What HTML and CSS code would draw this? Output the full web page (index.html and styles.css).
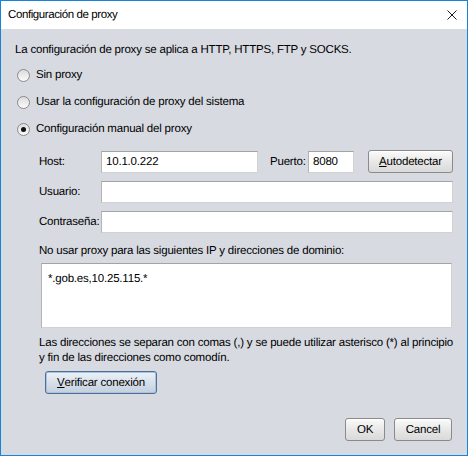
FILE: index.html
```html
<!DOCTYPE html>
<html lang="es">
<head>
<meta charset="utf-8">
<title>Configuración de proxy</title>
<link rel="stylesheet" href="styles.css">
</head>
<body>
<div class="window">
  <div class="titlebar">
    <span class="title">Configuración de proxy</span>
    <svg class="close" width="10" height="10" viewBox="0 0 10 10"><path d="M0.5 0.5 L9.5 9.5 M9.5 0.5 L0.5 9.5" stroke="#1b1b1b" stroke-width="1" fill="none"/></svg>
  </div>
  <div class="content">
    <div class="intro">La configuración de proxy se aplica a HTTP, HTTPS, FTP y SOCKS.</div>
    <div class="radios">
      <div class="radio-row"><span class="radio"></span><span>Sin proxy</span></div>
      <div class="radio-row"><span class="radio"></span><span>Usar la configuración de proxy del sistema</span></div>
      <div class="radio-row"><span class="radio checked"></span><span>Configuración manual del proxy</span></div>
    </div>
    <div class="manual">
      <div class="form">
        <span class="label">Host:</span>
        <div class="host-row">
          <div class="input host">10.1.0.222</div>
          <span class="label puerto">Puerto:</span>
          <div class="input port">8080</div>
          <div class="btn auto"><u>A</u>utodetectar</div>
        </div>
        <span class="label">Usuario:</span>
        <div class="input"></div>
        <span class="label">Contraseña:</span>
        <div class="input"></div>
      </div>
      <div class="exclude-label">No usar proxy para las siguientes IP y direcciones de dominio:</div>
      <div class="textarea">*.gob.es,10.25.115.*</div>
      <div class="note">Las direcciones se separan con comas (,) y se puede utilizar asterisco (*) al principio<br>y fin de las direcciones como comodín.</div>
      <div class="btn verify"><u>V</u>erificar conexión</div>
    </div>
    <div class="footer">
      <div class="btn ok">OK</div>
      <div class="btn cancel">Cancel</div>
    </div>
  </div>
</div>
</body>
</html>
```
FILE: styles.css
```css
html, body {
  margin: 0;
  padding: 0;
}
body {
  font-family: "Liberation Sans", Arial, sans-serif;
  font-size: 11.5px;
  letter-spacing: -0.2px;
  color: #000;
  background: #fff;
  text-rendering: geometricPrecision;
}
.window {
  width: 468px;
  height: 456px;
  box-sizing: border-box;
  border: 1px solid #1883d7;
  display: flex;
  flex-direction: column;
}
.titlebar {
  height: 28px;
  background: #fff;
  display: flex;
  align-items: center;
  justify-content: space-between;
  padding: 0 10px 0 7px;
  flex: none;
}
.title {
  font-size: 11.5px;
  letter-spacing: -0.4px;
  color: #000;
}
.close {
  display: block;
  margin-top: -1px;
}
.content {
  flex: 1;
  background: #d7dae1;
  padding: 13px 15px 14px 14px;
  display: flex;
  flex-direction: column;
  white-space: nowrap;
}
.intro {
  line-height: 17px;
}
.radios {
  margin-top: 3px;
  display: flex;
  flex-direction: column;
  gap: 1px;
}
.radio-row {
  height: 26px;
  display: flex;
  align-items: center;
  gap: 6px;
  padding-left: 2px;
}
.radio {
  width: 11px;
  height: 11px;
  border: 1px solid #8b8b8b;
  border-radius: 50%;
  background: linear-gradient(#dcdcdc, #fbfbfb);
  display: flex;
  align-items: center;
  justify-content: center;
}
.radio.checked::after {
  content: "";
  width: 5px;
  height: 5px;
  border-radius: 50%;
  background: #111;
}
.manual {
  margin-left: 24px;
  margin-top: 8px;
  display: flex;
  flex-direction: column;
}
.form {
  display: grid;
  grid-template-columns: 62px 1fr;
  row-gap: 8px;
  align-items: center;
}
.host-row {
  display: flex;
  align-items: center;
}
.input {
  height: 22px;
  box-sizing: border-box;
  background: #fff;
  border: 1px solid;
  border-color: #a3a3a3 #d2d2d2 #d2d2d2 #b4b4b4;
  padding-left: 4px;
  line-height: 20px;
}
.input.host {
  width: 157px;
}
.label.puerto {
  margin-left: 12px;
  width: 38px;
}
.input.port {
  width: 46px;
}
.btn {
  height: 23px;
  box-sizing: border-box;
  border: 1px solid #8a8a8a;
  border-radius: 3px;
  background: linear-gradient(#fbfbfb, #e8e8e8 50%, #d9d9d9);
  display: flex;
  align-items: center;
  justify-content: center;
  box-shadow: inset 0 1px 0 #fff;
}
.btn.auto {
  width: 85px;
  margin-left: 14px;
}
.exclude-label {
  margin-top: 10px;
  line-height: 16px;
}
.textarea {
  margin-top: 4px;
  margin-left: 2px;
  height: 65px;
  box-sizing: border-box;
  background: #fff;
  border: 1px solid;
  border-color: #a3a3a3 #d2d2d2 #d2d2d2 #b4b4b4;
  padding: 7px 0 0 6px;
  line-height: 16px;
}
.note {
  margin-top: 8px;
  line-height: 15px;
}
.btn.verify {
  margin-top: 5px;
  margin-left: 6px;
  width: 112px;
  height: 23px;
  border-color: #4f6f96;
  background: linear-gradient(#edf2f8, #d7e0ea 50%, #c4d0de);
  box-shadow: inset 0 0 0 1px #a9c2de;
}
.footer {
  margin-top: auto;
  display: flex;
  justify-content: flex-end;
  gap: 9px;
}
.btn.ok {
  width: 40px;
}
.btn.cancel {
  width: 58px;
}
```
